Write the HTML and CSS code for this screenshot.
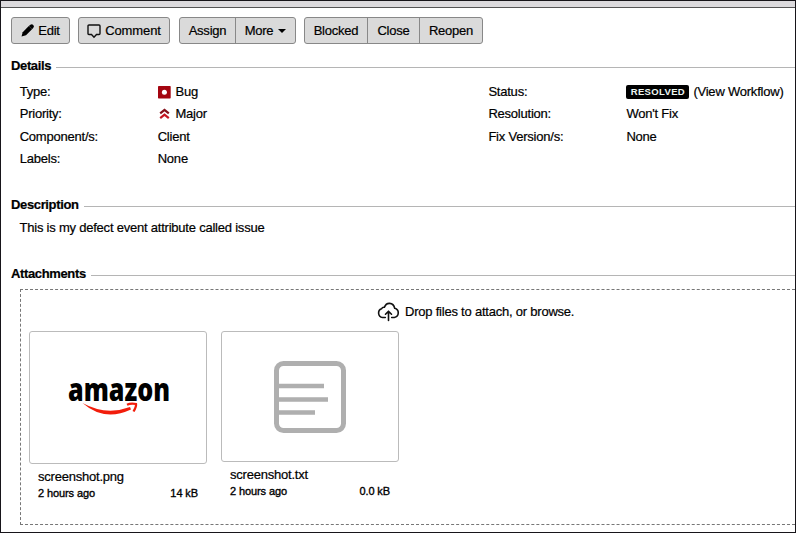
FILE: index.html
```html
<!DOCTYPE html>
<html lang="en">
<head>
<meta charset="utf-8">
<title>Issue details</title>
<link rel="stylesheet" href="styles.css">
</head>
<body>
<div class="page">
  <div class="topbar"></div>
  <div class="toolbar">
    <div class="group"><button class="btn edit"><svg width="13" height="13" viewBox="0 0 13 13"><path d="M.5 12.500 1.700 8.200 7.800 2.100 11 5.300 5 11.300z"/><path d="M7.800 2.100Q10.500-.9 12.200 1T11 5.300z"/></svg><span>Edit</span></button></div>
    <div class="group spaced"><button class="btn comment"><svg width="14" height="15" viewBox="0 0 14 15"><path d="M2 1h10q1 0 1 1v7.500q0 1-1 1H9.500L7 13.300 4.500 10.500H2q-1 0-1-1V2q0-1 1-1z" fill="none" stroke="#111" stroke-width="1.400"/></svg><span>Comment</span></button></div>
    <div class="group"><button class="btn assign">Assign</button><button class="btn more">More<i class="caret"></i></button></div>
    <div class="group"><button class="btn blocked">Blocked</button><button class="btn close">Close</button><button class="btn reopen">Reopen</button></div>
  </div>

  <section class="details">
    <h2><span>Details</span></h2>
    <div class="columns">
      <dl>
        <dt>Type:</dt><dd><svg class="bug" width="13" height="13" viewBox="0 0 13 13"><rect width="12.700" height="12.500" rx=".7" fill="#a40510"/><circle cx="6.400" cy="6.300" r="2.500" fill="#fff"/></svg>Bug</dd>
        <dt>Priority:</dt><dd><svg class="major" width="13" height="13" viewBox="0 0 13 13"><path d="M2.200 5.300 6.500 1.800 10.800 5.300" fill="none" stroke="#84101a" stroke-width="2.200"/><path d="M2.200 10.100 6.500 6.600 10.800 10.100" fill="none" stroke="#c51420" stroke-width="2.200"/></svg>Major</dd>
        <dt>Component/s:</dt><dd>Client</dd>
        <dt>Labels:</dt><dd>None</dd>
      </dl>
      <dl>
        <dt>Status:</dt><dd><span class="lozenge">RESOLVED</span>(View Workflow)</dd>
        <dt>Resolution:</dt><dd>Won't Fix</dd>
        <dt>Fix Version/s:</dt><dd>None</dd>
      </dl>
    </div>
  </section>

  <section class="description">
    <h2><span>Description</span></h2>
    <p>This is my defect event attribute called issue</p>
  </section>

  <section class="attachments">
    <h2><span>Attachments</span></h2>
    <div class="dropzone">
      <div class="drop"><svg width="23" height="20" viewBox="0 0 23 20" fill="none" stroke="#111" stroke-width="1.600" stroke-linecap="round" stroke-linejoin="round"><path d="M8.300 15.500H5.500A4.500 4.500 0 0 1 4.600 6.800Q5.400 5 7.400 5.300 9 1.200 12.600 1.400 16.800 1.700 17.700 6.300A4.700 4.700 0 0 1 17.300 15.500H14.700M11.500 18.500V9.500M8.500 12.200 11.500 9.200 14.500 12.200"/></svg><span>Drop files to attach, or browse.</span></div>
      <div class="files">
        <div class="file first">
          <div class="thumb"><svg width="150" height="90" viewBox="-20 -10 150 90"><text class="wordmark" x="5" y="38.200" textLength="102" lengthAdjust="spacingAndGlyphs">amazon</text><path d="M64 41.700Q68 40 73 41 74 43.500 70.500 48.500" fill="none" stroke="#fff" stroke-width="3.500"/><path d="M19.500 40Q43 53 67 44L68 46.500Q41 59 19.500 40z" fill="#f21d0b"/><path d="M64 41.700Q68 39.800 73 41 73.500 43.500 70.500 48.500" fill="none" stroke="#f21d0b" stroke-width="2.300"/></svg></div>
          <div class="name">screenshot.png</div>
          <div class="meta"><span>2 hours ago</span><span>14 kB</span></div>
        </div>
        <div class="file">
          <div class="thumb"><svg width="72" height="72" viewBox="0 0 72 72" fill="none" stroke="#afafaf"><rect x="2.500" y="2.500" width="67" height="67" rx="7" stroke-width="5"/><path d="M4 25H50M4 38.500H54M4 51.500H41" stroke-width="4.400"/></svg></div>
          <div class="name">screenshot.txt</div>
          <div class="meta"><span>2 hours ago</span><span>0.0 kB</span></div>
        </div>
      </div>
    </div>
  </section>
</div>
</body>
</html>
```
FILE: styles.css
```css
* { box-sizing: border-box; }
body { margin: 0; background: #fff; color: #000; font: 13px/22px "Liberation Sans", Arial, sans-serif; letter-spacing: -.22px; -webkit-text-stroke: .2px #000; }
.page { width: 796px; height: 533px; border: 1px solid #17151a; overflow: hidden; }
.topbar { height: 7px; background: #dcdadd; border-bottom: 1px solid #555; }
.toolbar { display: flex; gap: 8px; padding: 9px 0 0 10px; height: 47px; }
.group { display: flex; height: 27px; border: 1px solid #888; border-radius: 3px; background: #dadada; overflow: hidden; }
.spaced { margin-right: 1px; }
.btn { display: flex; align-items: center; justify-content: center; padding: 0; border: 0; background: none; color: #000; font: inherit; letter-spacing: inherit; line-height: 25px; white-space: nowrap; -webkit-text-stroke: inherit; }
.btn + .btn { border-left: 1px solid #888; }
.edit { width: 57px; gap: 4px; }
.comment { width: 90px; gap: 4px; letter-spacing: -.1px; }
.comment svg { margin-top: 2px; }
.assign { width: 55px; }
.more { width: 60px; gap: 5px; }
.caret { border: 4px solid transparent; border-top-color: #000; border-bottom: 0; }
.blocked { width: 62px; }
.close { width: 52px; }
.reopen { width: 63px; }
h2 { display: flex; gap: 5px; margin: 0; padding-left: 10px; height: 22px; font-size: 13px; line-height: 22px; letter-spacing: -.36px; }
h2::after { content: ""; flex: 1; height: 1px; margin-top: 12px; background: #b5b5b5; }
.details { height: 139px; }
.columns { display: grid; grid-template-columns: 468.700px 1fr; padding: 4px 0 0 18.700px; }
dl { display: grid; grid-template-columns: 138px 1fr; grid-auto-rows: 22.300px; align-content: start; margin: 0; }
dt { white-space: nowrap; }
dd { display: flex; align-items: center; margin: 0; white-space: nowrap; }
.bug, .major { margin: 0 4.500px 0 .3px; }
.lozenge { height: 14px; width: 63px; margin-right: 4px; border-radius: 2px; background: #000; color: #eef7f2; font: bold 9.500px/14px "Liberation Sans", sans-serif; letter-spacing: .35px; text-align: center; -webkit-text-stroke: 0; }
.description { height: 69px; }
p { margin: 0 0 0 18.500px; padding-top: 1px; }
.dropzone { margin: 4px 0 0 19px; height: 236px; border: 1px dashed #777; border-right: 0; }
.drop { display: flex; align-items: center; gap: 5px; height: 40px; padding: 3px 0 0 356px; }
.files { display: flex; gap: 14px; padding: 1px 0 0 8px; }
.file { width: 178px; }
.thumb { display: flex; align-items: center; justify-content: center; height: 131px; border: 1px solid #bbb; border-radius: 3px; }
.first .thumb { height: 133px; }
.wordmark { font: 800 32px "Open Sans", sans-serif; letter-spacing: 0; -webkit-text-stroke: .5px #000; }
.name { padding: 4px 9px 0; line-height: 18px; }
.meta { display: flex; justify-content: space-between; padding: 0 9px; font-size: 11px; line-height: 15px; letter-spacing: -.1px; -webkit-text-stroke-width: .35px; }
```
